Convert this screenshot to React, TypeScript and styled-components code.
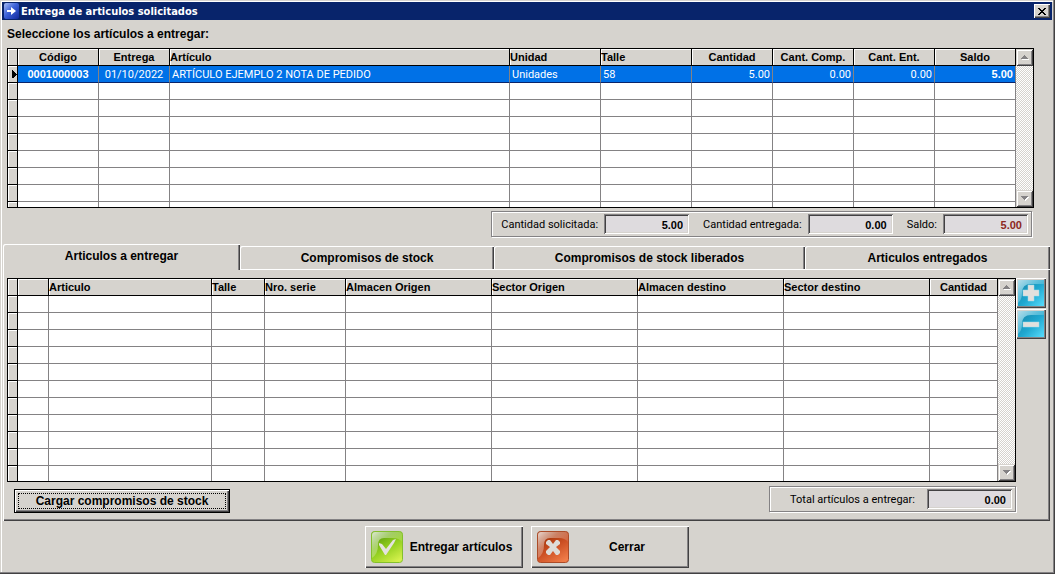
import React, { useState } from 'react';
import styled, { createGlobalStyle, css } from 'styled-components';

const face = '#d6d3ce';
const shade = '#848284';
const dark = '#424142';
const thinFont = 'Roboto, "Liberation Sans", Arial, sans-serif';

const raised = css`
  box-shadow: inset 1px 1px 0 #fff, inset -1px -1px 0 ${dark}, inset -2px -2px 0 ${shade};
`;

const GlobalStyle = createGlobalStyle`
  *, *::before, *::after { box-sizing: border-box; }
  body { margin: 0; background: ${face}; }
  body, button, input { font-family: "Liberation Sans", Arial, sans-serif; font-size: 11px; color: #000; }
  button { margin: 0; padding: 0; border: 0; background: ${face}; }
`;

const Window = styled.main`
  display: flex;
  flex-direction: column;
  min-height: 100vh;
  padding: 2px 3px 6px 2px;
  background: ${face};
  box-shadow: inset -1px -1px 0 ${dark}, inset -2px -2px 0 ${shade}, inset 1px 1px 0 ${face}, inset 2px 2px 0 #fff;
`;

const TitleBar = styled.header`
  display: flex;
  align-items: center;
  gap: 2px;
  height: 18px;
  padding: 0 2px;
  background: #08246b;
  color: #fff;
`;

const Title = styled.h1`
  flex: 1;
  margin: 0;
  padding-top: 1px;
  font: bold 11px/17px "DejaVu Sans Condensed", "DejaVu Sans", sans-serif;
`;

const CloseButton = styled.button`
  display: grid;
  place-items: center;
  width: 16px;
  height: 14px;
  ${raised}
`;

const Prompt = styled.h2`
  margin: 0 0 0 5px;
  font-size: 12px;
  line-height: 28px;
`;

const GridFrame = styled.div<{ $height: number }>`
  display: flex;
  flex: 1;
  height: ${p => p.$height}px;
  overflow: hidden;
  border: 1px solid #000;
  background: #fff;
`;

const GridViewport = styled.div`
  flex: 1;
  min-width: 0;
  overflow: hidden;
`;

const GridTable = styled.table`
  width: 100%;
  table-layout: fixed;
  border-collapse: separate;
  border-spacing: 0;
`;

type Align = 'left' | 'center' | 'right';

const HeadCell = styled.th<{ $align: Align }>`
  height: 17px;
  padding: 0;
  border-right: 1px solid #000;
  border-bottom: 1px solid #000;
  background: ${face};
  box-shadow: inset 1px 1px 0 #fff;
  font-size: 11px;
  line-height: 16px;
  text-align: ${p => p.$align};
  white-space: nowrap;
`;

const Selector = styled.td`
  height: 17px;
  padding: 0;
  border-right: 1px solid #000;
  border-bottom: 1px solid #000;
  background: ${face};
  box-shadow: inset 1px 1px 0 #fff;

  svg { display: block; margin: 0 0 0 auto; }
`;

const Cell = styled.td<{ $align: Align; $bold?: boolean; $selected?: boolean }>`
  height: 17px;
  padding: ${p => (p.$bold ? '0 2px' : '2px 2px 0')};
  border-right: 1px solid ${shade};
  border-bottom: 1px solid ${p => (p.$selected ? '#08246b' : shade)};
  background: ${p => (p.$selected ? '#0071e7' : '#fff')};
  color: ${p => (p.$selected ? '#fff' : '#000')};
  ${p => (p.$bold ? 'font-weight: bold;' : `font-family: ${thinFont};`)}
  line-height: ${p => (p.$bold ? 16 : 14)}px;
  text-align: ${p => p.$align};
  vertical-align: top;
  white-space: nowrap;
`;

const ScrollBar = styled.div`
  display: flex;
  flex-direction: column;
  justify-content: space-between;
  width: 17px;
  background: repeating-conic-gradient(#fff 0 25%, ${face} 0 50%) 0 0 / 2px 2px;
`;

const ScrollButton = styled.button`
  display: grid;
  place-items: center;
  width: 17px;
  height: 17px;
  box-shadow: inset 1px 1px 0 ${face}, inset -1px -1px 0 ${dark}, inset 2px 2px 0 #fff, inset -2px -2px 0 ${shade};
`;

const OrderSection = styled.section`
  display: flex;
  margin: 0 18px 0 5px;
`;

const Totals = styled.div<{ $width: number }>`
  display: flex;
  align-items: center;
  justify-content: flex-end;
  gap: 14px;
  width: ${p => p.$width}px;
  height: 26px;
  padding: 0 3px;
  border: 1px solid ${shade};
  box-shadow: inset 1px 1px 0 #fff, 1px 1px 0 #fff;
`;

const OrderTotals = styled.div`
  display: flex;
  justify-content: flex-end;
  margin: 3px 20px 7px 0;
`;

const FieldLabel = styled.label<{ $gap?: number }>`
  display: flex;
  align-items: center;
  gap: ${p => p.$gap ?? 6}px;
  font-family: ${thinFont};
  white-space: nowrap;
`;

const Field = styled.input<{ $red?: boolean }>`
  width: 85px;
  height: 20px;
  padding: 2px 6px 0 0;
  border: 0;
  outline: 0;
  background: #dedbde;
  box-shadow: inset 1px 1px 0 ${shade}, inset -1px -1px 0 #fff, inset 2px 2px 0 ${dark}, inset -2px -2px 0 ${face};
  color: ${p => (p.$red ? '#8c2821' : '#000')};
  font-weight: bold;
  text-align: right;
`;

const TabList = styled.div`
  display: flex;
  align-items: flex-end;
  margin: 0 2px 0 1px;
`;

const Tab = styled.button<{ $share: number; $active: boolean }>`
  flex: ${p => p.$share} 1 0;
  height: ${p => (p.$active ? 26 : 24)}px;
  padding-bottom: ${p => (p.$active ? 3 : 0)}px;
  border-bottom: ${p => (p.$active ? 0 : 1)}px solid #fff;
  border-top-left-radius: 2px;
  box-shadow: inset 1px 1px 0 #fff, inset -1px 0 0 ${dark}, inset -2px 0 0 ${shade};
  font-size: 12px;
  font-weight: bold;
`;

const TabPanel = styled.section`
  margin: 0 2px 0 1px;
  padding: 8px 4px;
  box-shadow: inset 1px 0 0 #fff, inset -1px -1px 0 ${dark}, inset -2px -2px 0 ${shade};
`;

const DeliveryRow = styled.div`
  display: flex;
`;

const LineTools = styled.div`
  display: flex;
  flex-direction: column;
  gap: 1px;
`;

const ToolButton = styled.button`
  display: grid;
  place-items: center;
  width: 30px;
  height: 30px;
  ${raised}
`;

const PanelFooter = styled.div`
  display: flex;
  align-items: flex-start;
  justify-content: space-between;
  min-height: 27px;
  margin: 4px 30px 0 7px;
`;

const LoadButton = styled.button`
  align-self: flex-end;
  width: 216px;
  height: 24px;
  padding: 3px;
  border: 1px solid #000;
  ${raised}
  font-size: 12px;
  font-weight: bold;

  span {
    display: block;
    border: 1px dotted #000;
    line-height: 14px;
  }
`;

const Actions = styled.footer`
  display: flex;
  justify-content: center;
  gap: 8px;
  margin-top: 5px;
`;

const ActionButton = styled.button`
  display: flex;
  align-items: center;
  width: 158px;
  height: 42px;
  padding: 0 4px 0 6px;
  ${raised}
  font-size: 12px;
  font-weight: bold;

  span { flex: 1; }
`;

interface Column {
  title: string;
  width?: number;
  align: Align;
  cellAlign?: Align;
  bold?: boolean;
}

const orderColumns: Column[] = [
  { title: 'Código', width: 81, align: 'center', bold: true },
  { title: 'Entrega', width: 71, align: 'center' },
  { title: 'Artículo', align: 'left' },
  { title: 'Unidad', width: 91, align: 'left' },
  { title: 'Talle', width: 91, align: 'left' },
  { title: 'Cantidad', width: 81, align: 'center', cellAlign: 'right' },
  { title: 'Cant. Comp.', width: 81, align: 'center', cellAlign: 'right' },
  { title: 'Cant. Ent.', width: 81, align: 'center', cellAlign: 'right' },
  { title: 'Saldo', width: 81, align: 'center', cellAlign: 'right', bold: true },
];

const orderRows = [
  ['0001000003', '01/10/2022', 'ARTÍCULO EJEMPLO 2 NOTA DE PEDIDO', 'Unidades', '58', '5.00', '0.00', '0.00', '5.00'],
];

const deliveryColumns: Column[] = [
  { title: '', width: 31, align: 'left' },
  { title: 'Articulo', align: 'left' },
  { title: 'Talle', width: 53, align: 'left' },
  { title: 'Nro. serie', width: 81, align: 'left' },
  { title: 'Almacen Origen', width: 146, align: 'left' },
  { title: 'Sector Origen', width: 146, align: 'left' },
  { title: 'Almacen destino', width: 146, align: 'left' },
  { title: 'Sector destino', width: 146, align: 'left' },
  { title: 'Cantidad', width: 68, align: 'center' },
];

const tabs = [
  { title: 'Articulos a entregar', share: 237 },
  { title: 'Compromisos de stock', share: 254 },
  { title: 'Compromisos de stock liberados', share: 311 },
  { title: 'Articulos entregados', share: 245 },
];

function Arrow({ down }: { down?: boolean }) {
  const d = down ? 'M0 0h7v1H6v1H5v1H4v1H3V3H2V2H1V1H0z' : 'M3 0h1v1h1v1h1v1h1v1H0V3h1V2h1V1h1z';
  return (
    <svg width="8" height="5" shapeRendering="crispEdges" aria-hidden="true">
      <path d={d} fill="#fff" transform="translate(1 1)" />
      <path d={d} fill={shade} />
    </svg>
  );
}

interface GridProps {
  label: string;
  columns: Column[];
  rows: string[][];
  lines: number;
  height: number;
}

function DataGrid({ label, columns, rows, lines, height }: GridProps) {
  return (
    <GridFrame $height={height}>
      <GridViewport>
        <GridTable aria-label={label}>
          <colgroup>
            <col style={{ width: 10 }} />
            {columns.map((c, i) => <col key={i} style={{ width: c.width }} />)}
          </colgroup>
          <thead>
            <tr>
              <Selector />
              {columns.map((c, i) => <HeadCell key={i} $align={c.align}>{c.title}</HeadCell>)}
            </tr>
          </thead>
          <tbody>
            {Array.from({ length: lines }, (_, r) => (
              <tr key={r}>
                <Selector>
                  {rows[r] && (
                    <svg width="5" height="8" shapeRendering="crispEdges" aria-hidden="true">
                      <path d="M0 0h1v1h1v1h1v1h1v1h1v1H4v1H3v1H2v1H0z" />
                    </svg>
                  )}
                </Selector>
                {columns.map((c, i) => (
                  <Cell key={i} $align={c.cellAlign ?? c.align} $bold={c.bold} $selected={!!rows[r]}>
                    {rows[r]?.[i]}
                  </Cell>
                ))}
              </tr>
            ))}
          </tbody>
        </GridTable>
      </GridViewport>
      <ScrollBar>
        <ScrollButton aria-label="Subir"><Arrow /></ScrollButton>
        <ScrollButton aria-label="Bajar"><Arrow down /></ScrollButton>
      </ScrollBar>
    </GridFrame>
  );
}

function AppIcon() {
  return (
    <svg width="15" height="16" viewBox="0 0 15 16" aria-hidden="true">
      <defs>
        <linearGradient id="app" x1="0" y1="0" x2="1" y2="1">
          <stop offset="0" stopColor="#a8bcf4" />
          <stop offset=".45" stopColor="#3c62d8" />
          <stop offset="1" stopColor="#10289c" />
        </linearGradient>
      </defs>
      <rect width="15" height="16" rx="2" fill="url(#app)" />
      <path d="M3 7h4V4l5 4-5 4V9H3z" fill="#fff" />
    </svg>
  );
}

function LineIcon({ kind }: { kind: 'plus' | 'minus' }) {
  return (
    <svg width="26" height="26" viewBox="0 0 26 26" aria-hidden="true">
      <defs>
        <linearGradient id={`line-${kind}`} x1=".1" y1=".1" x2="1" y2="1">
          <stop offset="0" stopColor="#1888ac" />
          <stop offset=".5" stopColor="#20a8d0" />
          <stop offset="1" stopColor="#58dcfc" />
        </linearGradient>
        <linearGradient id={`shine-${kind}`} x1="0" y1="0" x2=".8" y2=".8">
          <stop offset="0" stopColor="#b4dce8" />
          <stop offset=".5" stopColor="#60c0dc" />
          <stop offset="1" stopColor="#28acd0" />
        </linearGradient>
      </defs>
      <rect width="26" height="26" fill={`url(#line-${kind})`} />
      <path d="M0 0h26v4H13Q4 4 4 13 4 20 0 23z" fill={`url(#shine-${kind})`} />
      <path
        d={kind === 'plus' ? 'M10 5h6v5h5v6h-5v5h-6v-5H5v-6h5z' : 'M5 11h16v5H5z'}
        fill="#e2e0dd"
        stroke="#9cdcec"
        strokeWidth=".5"
      />
    </svg>
  );
}

function ActionIcon({ kind }: { kind: 'accept' | 'close' }) {
  const [light, mid, deep, edge] =
    kind === 'accept'
      ? ['#d4f04c', '#94d020', '#5c9c0c', '#84c02c']
      : ['#f07c48', '#cc5024', '#9c3004', '#ac4c28'];
  return (
    <svg width="32" height="32" viewBox="0 0 32 32" aria-hidden="true">
      <defs>
        <linearGradient id={`act-${kind}`} x1=".2" y1=".1" x2=".75" y2="1">
          <stop offset="0" stopColor={deep} />
          <stop offset=".5" stopColor={mid} />
          <stop offset="1" stopColor={light} />
        </linearGradient>
        <linearGradient id={`gloss-${kind}`} x1="0" y1="0" x2=".8" y2=".8">
          <stop offset="0" stopColor="#fff" stopOpacity=".8" />
          <stop offset=".45" stopColor="#fff" stopOpacity=".35" />
          <stop offset="1" stopColor={mid} stopOpacity=".4" />
        </linearGradient>
      </defs>
      <rect x=".5" y=".5" width="31" height="31" rx="3" fill={`url(#act-${kind})`} stroke={edge} />
      <path d="M1 4q0-3 3-3h24q3 0 3 3v7Q28 7 22 7h-9Q7 7 7 14 7 23 1 27z" fill={`url(#gloss-${kind})`} />
      {kind === 'accept' ? (
        <path d="M8 12l3 1 4 5 7-9 3-1-2 4-8 12h-1L8 14z" fill="#e4e2de" />
      ) : (
        <path d="M11 9h2l3 4 3-4h2l2 2v2l-4 3 4 4v2l-2 2h-2l-3-4-3 4h-2l-2-2v-2l4-4-4-3v-2z" fill="#dedcd8" />
      )}
    </svg>
  );
}

export default function App() {
  const [active, setActive] = useState(0);
  return (
    <>
      <GlobalStyle />
      <Window>
        <TitleBar>
          <AppIcon />
          <Title>Entrega de articulos solicitados</Title>
          <CloseButton aria-label="Cerrar ventana">
            <svg width="8" height="7" shapeRendering="crispEdges" aria-hidden="true">
              <path d="M0 0h2v1h1v1h2V1h1V0h2v1H7v1H6v1H5v1h1v1h1v1h1v1H6V6H5V5H3v1H2v1H0V6h1V5h1V4h1V3H2V2H1V1H0z" />
            </svg>
          </CloseButton>
        </TitleBar>

        <Prompt>Seleccione los artículos a entregar:</Prompt>
        <OrderSection>
          <DataGrid label="Artículos solicitados" columns={orderColumns} rows={orderRows} lines={9} height={160} />
        </OrderSection>
        <OrderTotals>
          <Totals $width={541}>
            <FieldLabel>Cantidad solicitada:<Field readOnly value="5.00" /></FieldLabel>
            <FieldLabel>Cantidad entregada:<Field readOnly value="0.00" /></FieldLabel>
            <FieldLabel>Saldo:<Field readOnly $red value="5.00" /></FieldLabel>
          </Totals>
        </OrderTotals>

        <TabList role="tablist">
          {tabs.map((t, i) => (
            <Tab
              key={t.title}
              role="tab"
              aria-selected={i === active}
              $share={t.share}
              $active={i === active}
              onClick={() => setActive(i)}
            >
              {t.title}
            </Tab>
          ))}
        </TabList>
        <TabPanel role="tabpanel">
          <DeliveryRow>
            <DataGrid label="Artículos a entregar" columns={deliveryColumns} rows={[]} lines={11} height={204} />
            <LineTools>
              <ToolButton aria-label="Agregar"><LineIcon kind="plus" /></ToolButton>
              <ToolButton aria-label="Quitar"><LineIcon kind="minus" /></ToolButton>
            </LineTools>
          </DeliveryRow>
          <PanelFooter>
            <LoadButton><span>Cargar compromisos de stock</span></LoadButton>
            <Totals $width={247}>
              <FieldLabel $gap={12}>Total artículos a entregar:<Field readOnly value="0.00" /></FieldLabel>
            </Totals>
          </PanelFooter>
        </TabPanel>

        <Actions>
          <ActionButton><ActionIcon kind="accept" /><span>Entregar artículos</span></ActionButton>
          <ActionButton><ActionIcon kind="close" /><span>Cerrar</span></ActionButton>
        </Actions>
      </Window>
    </>
  );
}
